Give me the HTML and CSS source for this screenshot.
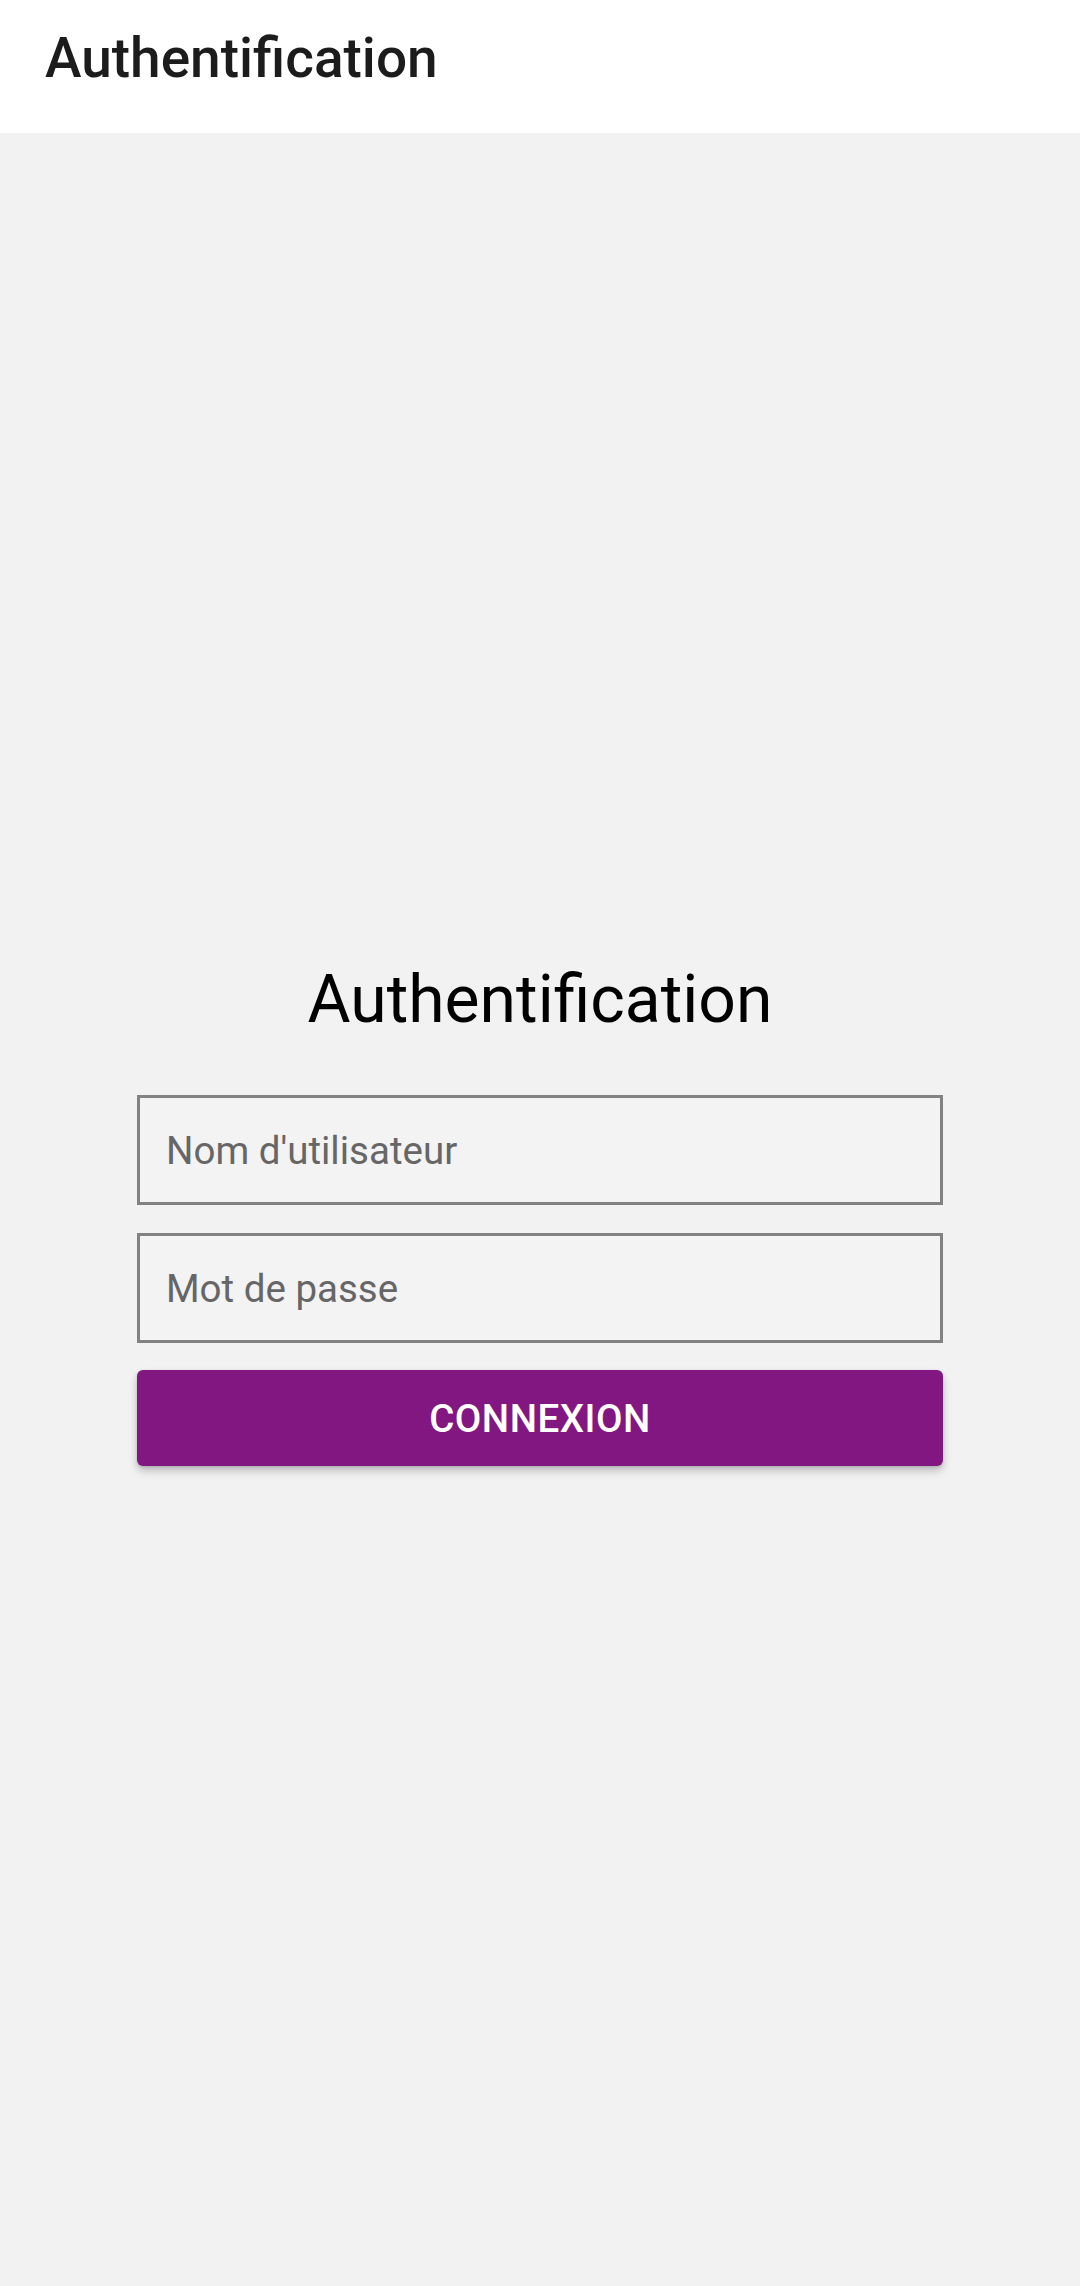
FILE: index.html
```html
<!DOCTYPE html>
<html lang="fr">
<head>
<meta charset="utf-8">
<title>Authentification</title>
<link rel="stylesheet" href="styles.css">
</head>
<body>
<header class="toolbar">
  <h1 class="toolbar-title">Authentification</h1>
</header>
<main class="content">
  <form class="login">
    <h2 class="login-title">Authentification</h2>
    <input class="field" type="text" placeholder="Nom d'utilisateur">
    <input class="field" type="password" placeholder="Mot de passe">
    <button class="btn" type="button">CONNEXION</button>
  </form>
</main>
</body>
</html>
```

FILE: styles.css
```css
html, body {
  margin: 0;
  padding: 0;
}
body {
  width: 1080px;
  height: 2286px;
  background: #f2f2f2;
  font-family: Roboto, "Noto Sans", sans-serif;
  display: flex;
  flex-direction: column;
  overflow: hidden;
}
.toolbar {
  height: 133px;
  background: #ffffff;
  display: flex;
  align-items: center;
  padding-left: 45px;
  padding-bottom: 16px;
  box-sizing: border-box;
  flex-shrink: 0;
}
.toolbar-title {
  margin: 0;
  font-size: 55px;
  font-weight: 500;
  color: #1c1c1c;
  line-height: 1;
}
.content {
  flex: 1;
  display: flex;
  flex-direction: column;
  align-items: center;
  padding-top: 823px;
}
.login {
  width: 806px;
  display: flex;
  flex-direction: column;
}
.login-title {
  margin: 0 0 51px;
  text-align: center;
  font-size: 66px;
  font-weight: 400;
  color: #000;
  line-height: 88px;
}
.field {
  height: 110px;
  box-sizing: border-box;
  border: 3px solid #828282;
  background: #f3f3f3;
  padding: 0 0 0 26px;
  margin: 0 0 28px;
  font-family: Roboto, sans-serif;
  font-size: 38.5px;
  color: #222;
  outline: none;
}
.field::placeholder {
  color: #666666;
}
.field + .field {
  margin-bottom: 27px;
}
.btn {
  height: 96px;
  border: none;
  border-radius: 6px;
  background: #821781;
  color: #ffffff;
  font-family: Roboto, sans-serif;
  font-size: 38.5px;
  font-weight: 500;
  letter-spacing: 0.5px;
  box-shadow: 0 5px 8px rgba(0,0,0,0.22), 0 1px 3px rgba(0,0,0,0.12);
}
```
